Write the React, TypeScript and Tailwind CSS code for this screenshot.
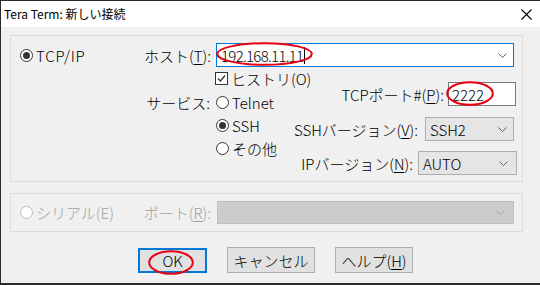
import React from "react";

const F = "font-['Noto_Sans_CJK_JP','Noto_Sans',sans-serif]";

function Radio({ checked, disabled }: { checked?: boolean; disabled?: boolean }) {
  return (
    <span
      className={`w-[13px] h-[13px] rounded-full border ${
        disabled ? "border-[#bcbcbc]" : "border-[#333333]"
      } bg-white flex items-center justify-center shrink-0`}
    >
      {checked && <span className="w-[7px] h-[7px] rounded-full bg-[#333333]" />}
    </span>
  );
}

function Chevron({ color }: { color: string }) {
  return (
    <svg width="9" height="5" viewBox="0 0 9 5" className="shrink-0">
      <path d="M0.5 0.5 L4.5 4.5 L8.5 0.5" fill="none" stroke={color} strokeWidth="1" />
    </svg>
  );
}

function U({ c }: { c: string }) {
  return <span className="underline underline-offset-[2px] decoration-[1px]">{c}</span>;
}

function Ellipse({ className, w, h }: { className: string; w: number; h: number }) {
  return (
    <svg
      width={w}
      height={h}
      viewBox={`0 0 ${w} ${h}`}
      className={`absolute pointer-events-none ${className}`}
    >
      <ellipse cx={w / 2} cy={h / 2} rx={w / 2 - 1.2} ry={h / 2 - 1.2} fill="none" stroke="#e60012" strokeWidth="2" />
    </svg>
  );
}

export default function App() {
  return (
    <div
      className={`${F} font-light w-[540px] h-[285px] bg-[#f0f0f0] border-l border-t border-b-2 border-[#2b2b2b] flex flex-col overflow-hidden text-black text-[15px] leading-none whitespace-nowrap`}
    >
      {/* Title bar */}
      <div className="h-[26px] bg-white flex items-center justify-between pl-[3px] pr-[8px] shrink-0">
        <span className="text-[12px] font-normal">Tera Term: 新しい接続</span>
        <svg width="11" height="11" viewBox="0 0 11 11">
          <path d="M0.5 0.5 L10.5 10.5 M10.5 0.5 L0.5 10.5" stroke="#000" strokeWidth="1.1" />
        </svg>
      </div>

      <div className="pl-[9px] pt-[8px] flex flex-col">
        {/* Group 1 */}
        <div className="w-[513px] h-[147px] border border-[#dcdcdc] flex flex-col pt-[7px]">
          <div className="flex items-center h-[24px]">
            <div className="flex items-center gap-[3px] pl-[9px]">
              <Radio checked />
              <span className="tracking-[0.8px]">TCP/IP</span>
            </div>
            <span className="ml-auto">
              ホスト(<U c="T" />):
            </span>
            <div className="relative ml-[5px] mr-[8px] w-[298px] h-[24px] bg-white border border-[#0078d7] flex items-center pl-[4px] pr-[6px]">
              <span className="tracking-[-0.7px]">192.168.11.11</span>
              <span className="ml-[1px] w-px h-[17px] bg-black" />
              <span className="ml-auto">
                <Chevron color="#606060" />
              </span>
              <Ellipse className="left-[-1px] top-[-2px]" w={97} h={24} />
            </div>
          </div>

          <div className="flex mt-[1px]">
            {/* column A */}
            <div className="w-[204px] shrink-0 flex flex-col">
              <div className="mt-[23px] h-[23px] flex items-center justify-end pr-[5px]">サービス:</div>
            </div>
            {/* column B */}
            <div className="w-[70px] shrink-0 flex flex-col">
              <div className="h-[20px] flex items-center gap-[3px]">
                <span className="w-[13px] h-[13px] shrink-0 border border-[#333333] bg-white flex items-center justify-center">
                  <svg width="11" height="11" viewBox="0 0 11 11">
                    <path d="M2 5.5 L4.5 8 L9 2.5" fill="none" stroke="#333" strokeWidth="1.3" />
                  </svg>
                </span>
                <span>ヒストリ(O)</span>
              </div>
              <div className="mt-[3px] h-[23px] flex items-center gap-[3px] pl-[1px]">
                <Radio />
                <span>Telnet</span>
              </div>
              <div className="h-[23px] flex items-center gap-[3px] pl-[1px]">
                <Radio checked />
                <span>SSH</span>
              </div>
              <div className="h-[23px] flex items-center gap-[3px] pl-[1px]">
                <Radio />
                <span>その他</span>
              </div>
            </div>
            {/* column C */}
            <div className="flex-1 min-w-0 flex flex-col items-end">
              <div className="mt-[14px] h-[24px] flex items-center mr-[6px]">
                <span>
                  TCPポート#(<U c="P" />):
                </span>
                <div className="relative ml-[4px] w-[68px] h-[24px] bg-white border border-[#7a7a7a] flex items-center pl-[3px]">
                  <span>2222</span>
                  <Ellipse className="left-[-3px] top-[-2px]" w={48} h={25} />
                </div>
              </div>
              <div className="mt-[11px] h-[24px] flex items-center mr-[8px]">
                <span>
                  SSHバージョン(<U c="V" />):
                </span>
                <div className="ml-[7px] w-[89px] h-[24px] bg-[#e5e5e5] border border-[#adadad] flex items-center pl-[4px] pr-[6px] justify-between">
                  <span>SSH2</span>
                  <Chevron color="#606060" />
                </div>
              </div>
              <div className="mt-[10px] h-[24px] flex items-center mr-[5px]">
                <span>
                  IPバージョン(<U c="N" />):
                </span>
                <div className="ml-[5px] w-[99px] h-[24px] bg-[#e5e5e5] border border-[#adadad] flex items-center pl-[4px] pr-[8px] justify-between">
                  <span>AUTO</span>
                  <Chevron color="#606060" />
                </div>
              </div>
            </div>
          </div>
        </div>

        {/* Group 2 */}
        <div className="mt-[11px] w-[513px] h-[39px] border border-[#dcdcdc] flex items-center text-[#a0a0a0]">
          <div className="flex items-center gap-[3px] pl-[9px]">
            <Radio disabled />
            <span>シリアル(E)</span>
          </div>
          <span className="ml-auto">
            ポート(<U c="R" />):
          </span>
          <div className="ml-[6px] mr-[8px] w-[297px] h-[23px] bg-[#cccccc] border border-[#bfbfbf] flex items-center justify-end pr-[8px]">
            <Chevron color="#a0a0a0" />
          </div>
        </div>

        {/* Buttons */}
        <div className="mt-[15px] flex items-center ml-[128px] gap-[20px]">
          <div className="relative w-[69px] h-[25px] bg-[#e1e1e1] border-2 border-[#0078d7] flex items-center justify-center">
            <span>OK</span>
            <Ellipse className="left-[8px] top-[0px]" w={46} h={25} />
          </div>
          <div className="w-[88px] h-[26px] bg-[#e1e1e1] border border-[#adadad] flex items-center justify-center">
            キャンセル
          </div>
          <div className="w-[78px] h-[26px] bg-[#e1e1e1] border border-[#adadad] flex items-center justify-center">
            <span>
              ヘルプ(<U c="H" />)
            </span>
          </div>
        </div>
      </div>
    </div>
  );
}
